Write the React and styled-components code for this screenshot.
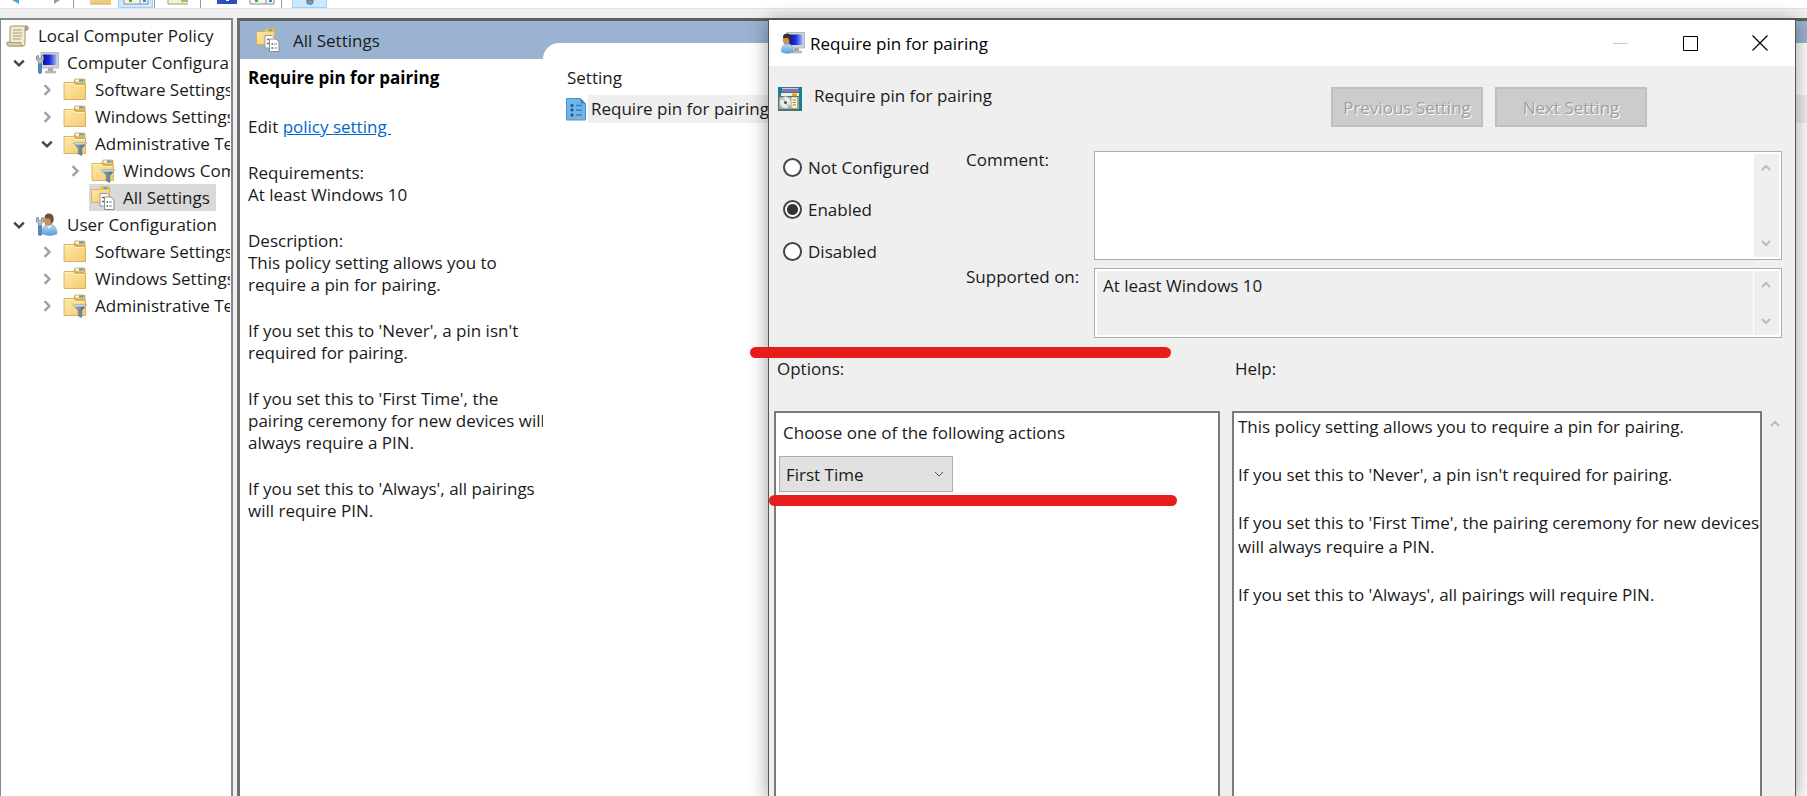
import React from "react";
import styled, { createGlobalStyle } from "styled-components";

const GlobalStyle = createGlobalStyle`
  *, *::before, *::after { box-sizing: border-box; }
  body { margin: 0; overflow: hidden; }
  body, button, select, textarea, input {
    font-family: "Open Sans", "Noto Sans", sans-serif;
    font-size: 17px;
    color: #1a1a1a;
  }
`;

const Page = styled.div`
  position: relative;
  display: flex;
  flex-direction: column;
  height: 100vh;
  overflow: hidden;
  background: #efefef;
`;

/* ---------- toolbar ---------- */

const Toolbar = styled.header`
  display: flex;
  flex: none;
  height: 8px;
  background: #fff;
  box-shadow: 0 1px 0 #e3e3e3;
`;

const ToolGroup = styled.div`
  display: flex;
  padding-left: ${(p) => p.$before}px;
  padding-right: ${(p) => p.$after}px;
  border-right: ${(p) => (p.$last ? "0" : "1px solid #9a9a9a")};
`;

const ToolButton = styled.button`
  display: flex;
  justify-content: center;
  width: 35px;
  height: 8px;
  padding: 0;
  border: solid ${(p) => (p.$active ? "#99d1ff" : "transparent")};
  border-width: 0 1px 1px;
  background: ${(p) => (p.$active ? "#cce8ff" : "transparent")};
`;

/* ---------- console ---------- */

const Workspace = styled.div`
  display: flex;
  flex: 1;
  gap: 4px;
  min-height: 0;
  padding-top: 10px;
`;

const TreePane = styled.nav`
  flex: none;
  width: 233px;
  overflow: hidden;
  padding: 2px 1px 0 0;
  background: #fff;
  border: solid #828790;
  border-width: 2px 2px 0 1px;
`;

const TreeList = styled.ul`
  margin: 0;
  padding: 0;
  list-style: none;
`;

const TreeRow = styled.li`
  display: flex;
  align-items: center;
  height: 27px;
  padding-left: ${(p) => (p.$level ? p.$level * 28 - 24 : 3)}px;
  white-space: nowrap;
`;

const Expander = styled.button`
  display: flex;
  flex: none;
  align-items: center;
  justify-content: center;
  width: 28px;
  height: 27px;
  padding: 0;
  border: 0;
  background: none;
`;

const TreeLabel = styled.span`
  display: flex;
  align-items: center;
  gap: 8px;
  min-width: 0;
  height: 27px;
  padding: 0 ${(p) => (p.$selected ? 6 : 0)}px 0 2px;
  line-height: 24px;
  background: ${(p) => (p.$selected ? "#d9d9d9" : "transparent")};
`;

const TreeText = styled.span`
  min-width: 0;
  overflow: hidden;
`;

const Results = styled.main`
  display: flex;
  flex: 1;
  min-width: 0;
  background: #99b3d1;
  border: solid #6f6f6f;
  border-width: 3px 0 0 3px;
  border-top-color: #5f5f5f;
`;

const DetailColumn = styled.section`
  display: flex;
  flex: none;
  flex-direction: column;
  width: 303px;
`;

const DetailHeader = styled.div`
  display: flex;
  align-items: center;
  gap: 13px;
  height: 38px;
  padding-left: 16px;
`;

const Detail = styled.div`
  display: flex;
  flex: 1;
  flex-direction: column;
  gap: 24px;
  padding: 8px 0 0 8px;
  background: #fff;
  line-height: 22px;
  white-space: nowrap;
`;

const DetailTitle = styled.h1`
  margin: 0 0 3px;
  font-size: 17px;
  line-height: 22px;
  color: #000;
`;

const Para = styled.p`
  margin: 0;
`;

const PolicyLink = styled.a`
  color: #0066cc;
  text-decoration: underline;
  white-space: pre;
`;

const ListColumn = styled.section`
  flex: 1;
  margin-top: 22px;
  padding: 23px 0 0 23px;
  background: #fff;
  border-top-left-radius: 16px;
`;

const SettingTable = styled.table`
  width: 100%;
  border-collapse: collapse;
  th, td { padding: 0; font-weight: 400; text-align: left; }
  th { height: 29px; padding-left: 1px; vertical-align: top; line-height: 24px; }
`;

const SettingCell = styled.div`
  display: flex;
  gap: 2px;
  align-items: center;
  height: 28px;
`;

const SettingName = styled.span`
  flex: 1;
  height: 28px;
  padding-left: 3px;
  line-height: 28px;
  background: #efefef;
`;

/* ---------- dialog ---------- */

const Dialog = styled.div`
  position: absolute;
  top: 18px;
  right: 11px;
  bottom: 0;
  left: 768px;
  display: flex;
  flex-direction: column;
  background: #efefef;
  border: solid #555;
  border-width: 2px 1px 0;
  box-shadow: 0 4px 18px rgba(0, 0, 0, 0.4);
`;

const TitleBar = styled.div`
  display: flex;
  flex: none;
  align-items: center;
  height: 46px;
  padding-left: 12px;
  background: #fff;
`;

const TitleText = styled.h2`
  flex: 1;
  margin: 0;
  padding-left: 5px;
  font-size: 17px;
  font-weight: 400;
  color: #000;
`;

const CaptionButton = styled.button`
  display: flex;
  align-items: center;
  justify-content: center;
  width: 70px;
  height: 46px;
  padding: 0;
  border: 0;
  background: none;
`;

const DialogHeader = styled.div`
  display: flex;
  flex: none;
  gap: 12px;
  height: 85px;
  padding: 21px 148px 0 9px;
`;

const PolicyName = styled.div`
  flex: 1;
  line-height: 18px;
`;

const NavButton = styled.button`
  width: 152px;
  height: 40px;
  padding: 0;
  border: 2px solid #bfbfbf;
  background: #cccccc;
  color: #a0a0a0;
  text-shadow: 1px 1px 0 #fff;
`;

const StateGrid = styled.div`
  display: grid;
  flex: none;
  grid-template-columns: 183px 128px 1fr;
  grid-template-rows: 109px 70px;
  row-gap: 8px;
  padding: 0 13px 0 14px;
`;

const RadioSet = styled.fieldset`
  display: flex;
  flex-direction: column;
  grid-row: 1 / 3;
  gap: 10px;
  margin: 0;
  padding: 0;
  border: 0;
`;

const RadioLabel = styled.label`
  display: flex;
  align-items: center;
  gap: 6px;
  height: 32px;
`;

const Radio = styled.input`
  appearance: none;
  width: 19px;
  height: 19px;
  margin: 0;
  border: 2px solid #444;
  border-radius: 50%;
  background: #fff;
  &:checked { background: radial-gradient(circle, #333 5px, #fff 6px); }
`;

const FieldLabel = styled.label`
  line-height: 18px;
`;

const FieldBox = styled.div`
  display: flex;
  overflow: hidden;
  padding: 2px;
  border: 1px solid #adadad;
  background: #fff;
`;

const FieldText = styled.textarea`
  flex: 1;
  min-width: 0;
  height: 100%;
  padding: 3px 6px;
  border: 0;
  outline: 0;
  resize: none;
  overflow: hidden;
  line-height: 24px;
  background: ${(p) => (p.readOnly ? "#efefef" : "#fff")};
`;

const ScrollTrack = styled.div`
  display: flex;
  flex: none;
  flex-direction: column;
  align-items: center;
  justify-content: space-between;
  width: 26px;
  padding: 9px 2px 9px 0;
  border-left: 1px solid #fff;
  background: #efefef;
`;

const Panes = styled.div`
  display: grid;
  flex: 1;
  grid-template-columns: 446fr 530fr 20px;
  grid-template-rows: 52px 1fr;
  column-gap: 12px;
  min-height: 0;
  padding: 21px 1px 0 5px;
`;

const PaneLabel = styled.div`
  padding-left: 3px;
  line-height: 20px;
`;

const Pane = styled.section`
  border: 2px solid #7a7a7a;
  border-bottom: 0;
  background: #fff;
`;

const OptionsPane = styled(Pane)`
  padding: 8px 3px;
`;

const HelpPane = styled(Pane)`
  min-width: 0;
  padding: 2px 0 0 4px;
  line-height: 24px;
  white-space: nowrap;
  p { margin: 0 0 24px; }
`;

const OptionLabel = styled.label`
  display: block;
  padding-left: 4px;
  line-height: 24px;
`;

const SelectWrap = styled.div`
  display: grid;
  align-items: center;
  width: 174px;
  margin-top: 11px;
  & > * { grid-area: 1 / 1; }
  & > svg { justify-self: end; margin-right: 9px; pointer-events: none; }
`;

const Select = styled.select`
  appearance: none;
  width: 100%;
  height: 36px;
  padding: 0 6px;
  border: 1px solid #adadad;
  border-radius: 0;
  background: #e1e1e1;
`;

const PaneScroll = styled.div`
  grid-column: 3;
  padding: 8px 8px 0 0;
  margin-left: -10px;
  text-align: center;
  line-height: 8px;
`;

/* Red pen strokes drawn over the windows */
const Marker = styled.div`
  position: absolute;
  top: ${(p) => p.$top}px;
  left: ${(p) => p.$left}px;
  width: ${(p) => p.$width}px;
  height: 11px;
  border-radius: 6px;
  background: #e71d1c;
`;

/* ---------- icons ---------- */

const FolderShape = () => (
  <>
    <path d="M1 4.500h9l2-3.500h9.500q1 0 1 1V21.500H1z" fill="#e3b95b" />
    <path d="M12 1h9.500v4H12z" fill="#f4d583" stroke="#c99a3c" strokeWidth=".7" />
    <path d="M16 2.500h4.500" stroke="#3d9be0" strokeWidth="1.800" />
    <path d="M12.500 2.500H16" stroke="#fff" strokeWidth="1.500" />
    <path d="M1 4.500h9.500l2 2H22.500V21.500H1z" fill="url(#folder)" stroke="#d2a850" strokeWidth=".8" />
    <path d="M2 5.500h8l2 2h9.500" stroke="#fff0bd" strokeWidth="1" fill="none" />
  </>
);

const IconDefs = () => (
  <svg width="0" height="0" style={{ position: "absolute" }} aria-hidden="true">
    <defs>
      <linearGradient id="folder" x1="0" y1="0" x2="1" y2="1">
        <stop offset="0" stopColor="#ffe9a6" />
        <stop offset="1" stopColor="#f3cb72" />
      </linearGradient>
      <linearGradient id="screen" x1="0" y1="0" x2="1" y2="0">
        <stop offset="0" stopColor="#0712a8" />
        <stop offset=".5" stopColor="#1c2fe0" />
        <stop offset="1" stopColor="#9ab8ff" />
      </linearGradient>
      <linearGradient id="shirt" x1="0" y1="0" x2="0" y2="1">
        <stop offset="0" stopColor="#b7dbf5" />
        <stop offset="1" stopColor="#5c9bd3" />
      </linearGradient>
      <linearGradient id="funnel" x1="0" y1="0" x2="1" y2="0">
        <stop offset="0" stopColor="#9db6c9" />
        <stop offset=".5" stopColor="#6d8ba5" />
        <stop offset="1" stopColor="#3f5d7a" />
      </linearGradient>
    </defs>
  </svg>
);

const Icon = ({ children }) => (
  <svg width="24" height="24" viewBox="0 0 24 24" fill="none" aria-hidden="true" style={{ flex: "none" }}>
    {children}
  </svg>
);

const FolderIcon = () => <Icon><FolderShape /></Icon>;

const FilterFolderIcon = () => (
  <Icon>
    <FolderShape />
    <path d="M10.500 11h13l-4.700 5.500v7l-3.400-1.500v-5.500z" fill="url(#funnel)" stroke="#4d6a84" strokeWidth=".6" />
    <path d="M11 11.800h12" stroke="#c7d8e5" strokeWidth="1.600" />
  </Icon>
);

const AllSettingsIcon = () => (
  <Icon>
    <path d="M.5 3.500h8l2-3h7q1 0 1 1v15H.5z" fill="url(#folder)" stroke="#d2a850" strokeWidth=".8" />
    <path d="M9.500 .8h8.500v3.200h-8.500z" fill="#f1c24e" />
    <path d="M12.500 2.300h4" stroke="#3d9be0" strokeWidth="1.500" />
    <path d="M9 7.500h7l3 3V20H9z" fill="#fff" stroke="#9a9a9a" />
    <path d="M11 11.500h2M11 15.500h2" stroke="#667" strokeWidth="1.300" />
    <path d="M13.500 11h6.500l3 3v9.500h-9.500z" fill="#fff" stroke="#8d8d8d" />
    <path d="M15.500 16h1.500M15.500 20h1.500" stroke="#44506e" strokeWidth="1.600" />
    <path d="M18 16h3M18 20h3" stroke="#7a86a0" strokeWidth="1.200" />
  </Icon>
);

const ScrollIcon = () => (
  <Icon>
    <path d="M5 2q-1 0-1 2v14H1.500q-.5 0-.5 1.500Q1 22 3 22h14q2 0 2-2.500V6h2q1 0 1-2 0-2-2-2z" fill="#f3ebcf" stroke="#a39468" />
    <path d="M19 6V4q0-2 1.500-2T22 4t-1 2z" fill="#b5a982" stroke="#8f825c" strokeWidth=".7" />
    <path d="M1.500 18.500H15V20q0 2 2 2H3q-2 0-2-2z" fill="#d9cda3" stroke="#a39468" strokeWidth=".8" />
    <path d="M7 6h9M7 9h9M7 12h9M7 15h8" stroke="#a69c7d" />
  </Icon>
);

const Monitor = () => (
  <>
    <path d="M6 1.500h17.500V17H6z" fill="#d3d3d3" stroke="#aaa" strokeWidth=".8" />
    <path d="M8 3.500h13.500V14H8z" fill="url(#screen)" />
    <path d="M13 17h5v3.500h-5z" fill="#a9a9a9" />
    <path d="M10.500 20h10v2h-10z" fill="#c4c4c4" stroke="#999" strokeWidth=".5" />
  </>
);

const Wrench = () => (
  <>
    <path d="M1.500 5v4l2 1.500v3h3v-3l2-1.500V5l-2-.5v3h-3v-3z" fill="#b7bec6" stroke="#6d7882" strokeWidth=".7" />
    <path d="M3.500 13h3v8q0 1.500-1.500 1.500T3.500 21z" fill="#4f8ecb" stroke="#2f689f" strokeWidth=".7" />
  </>
);

const ComputerIcon = () => <Icon><Monitor /><Wrench /></Icon>;

const UserIcon = () => (
  <Icon>
    <path d="M7 21q0-8 4-9.500h6q5 2 5 9.500-7 3-15 0z" fill="url(#shirt)" stroke="#6fa3cf" strokeWidth=".6" />
    <ellipse cx="13" cy="7.500" rx="4" ry="5.500" fill="#c8905a" />
    <path d="M9.500 5q0-4.500 4.500-4.500 5.500 0 4.500 7.500-1 2.500-2.500 3 0-4-1.500-5.500-2.500 0-5-.5z" fill="#6b5038" />
    <path d="M12 13l2.500 3 2-3.500z" fill="#e9f5fd" />
    <Wrench />
  </Icon>
);

const UserComputerIcon = () => (
  <Icon>
    <Monitor />
    <path d="M.5 21q-.5-7 4-8h4q4 1.500 3.800 8-6 3-11.800 0z" fill="url(#shirt)" stroke="#6fa3cf" strokeWidth=".5" />
    <ellipse cx="5.500" cy="8.800" rx="3.800" ry="4.800" fill="#c8905a" />
    <path d="M2 7q-.5-4.500 4-4.500 5 0 4 6.500-.8 2.500-1.800 3 0-3.500-1.400-5.200-2.300.4-4.800.2z" fill="#3f3027" />
  </Icon>
);

const PolicyIcon = () => (
  <Icon>
    <path d="M0 0h24v24H0z" fill="#4f6f7c" />
    <path d="M0 0h4v7H0zM21 0h3v24h-3z" fill="#16808a" />
    <path d="M4 1h17v4H4z" fill="#7a78b4" />
    <path d="M4 1.500h16" stroke="#c6c6e6" />
    <path d="M3 6h18v3H3z" fill="#ededed" />
    <path d="M14 6.500h5v2.500h-5z" fill="#f0a400" />
    <path d="M1 10h20v12H1z" fill="#a5a999" />
    <circle cx="7.500" cy="15.500" r="6" fill="#e9ecea" stroke="#9da5a2" strokeWidth=".7" />
    <path d="M7.500 15.500l5 3-2 2.500z" fill="#a7d9bd" />
    <path d="M7.500 15.500l-4-4 2.500-1.500z" fill="#d6b3d8" />
    <circle cx="7.500" cy="15.500" r="1.500" fill="#555" />
    <path d="M13 10h6.500v11.500h-4.500l-2-2z" fill="#fff6d0" stroke="#a38f57" strokeWidth=".7" />
    <path d="M14.500 13h3.500M14.500 15.500h3.500M14.500 18h3.500" stroke="#8a8366" />
  </Icon>
);

const SettingIcon = () => (
  <svg width="20" height="24" viewBox="0 0 20 24" fill="none" aria-hidden="true">
    <path d="M.5 1.500h14l5 5V23H.5z" fill="#6fb5ea" stroke="#4c93cd" />
    <path d="M14.500 1.500v5h5z" fill="#3f86c2" />
    <path d="M4.500 8.500h3M4.500 13h3M4.500 18h3M6 7v3M6 11.500v3M6 16.500v3" stroke="#1b4c7a" strokeWidth="1.500" />
    <path d="M10 8.500h6M10 13h6M10 18h6" stroke="#3c7db5" strokeWidth="1.600" />
  </svg>
);

const Chevron = ({ dir, color = "#bcbcbc", width = 2, size = 10 }) => {
  const d = {
    up: "M1 7l4-4 4 4",
    down: "M1 3l4 4 4-4",
    right: "M3 1l4 4-4 4",
  }[dir];
  return (
    <svg width={size} height={size} viewBox="0 0 10 10" fill="none" aria-hidden="true" style={{ flex: "none" }}>
      <path d={d} stroke={color} strokeWidth={width} />
    </svg>
  );
};

const ToolIcon = ({ children }) => (
  <svg width="26" height="7" viewBox="0 0 26 7" fill="none" aria-hidden="true">{children}</svg>
);

const WindowTool = () => (
  <ToolIcon>
    <path d="M1 0h24v4H1z" fill="#f4f4f4" />
    <path d="M1 0v4h24V0M17 0v4" stroke="#8d8d8d" />
    <path d="M6 1h3" stroke="#44b02c" strokeWidth="2" />
    <path d="M20 1h3" stroke="#3c85cf" strokeWidth="2" />
  </ToolIcon>
);

/* ---------- page ---------- */

const tree = [
  { level: 0, label: "Local Computer Policy", icon: ScrollIcon },
  { level: 1, label: "Computer Configurat", icon: ComputerIcon, open: true },
  { level: 2, label: "Software Settings", icon: FolderIcon, open: false },
  { level: 2, label: "Windows Settings", icon: FolderIcon, open: false },
  { level: 2, label: "Administrative Te", icon: FilterFolderIcon, open: true },
  { level: 3, label: "Windows Com", icon: FilterFolderIcon, open: false },
  { level: 3, label: "All Settings", icon: AllSettingsIcon, selected: true },
  { level: 1, label: "User Configuration", icon: UserIcon, open: true },
  { level: 2, label: "Software Settings", icon: FolderIcon, open: false },
  { level: 2, label: "Windows Settings", icon: FolderIcon, open: false },
  { level: 2, label: "Administrative Te", icon: FilterFolderIcon, open: false },
];

const TreeItem = ({ item }) => {
  const ItemIcon = item.icon;
  return (
    <TreeRow $level={item.level}>
      {item.level > 0 && (
        <Expander
          aria-label={item.label}
          as={item.open === undefined ? "span" : "button"}
        >
          {item.open === true && <Chevron dir="down" color="#444" size={12} />}
          {item.open === false && <Chevron dir="right" color="#a0a0a0" size={12} />}
        </Expander>
      )}
      <TreeLabel $selected={item.selected}>
        <ItemIcon />
        <TreeText>{item.label}</TreeText>
      </TreeLabel>
    </TreeRow>
  );
};

export default function App() {
  return (
    <Page>
      <GlobalStyle />
      <IconDefs />
      <Toolbar>
        <ToolGroup $before={0} $after={3}>
          <ToolButton aria-label="Back">
            <ToolIcon><path d="M7 0l7 4V0z" fill="#4aa3dc" /></ToolIcon>
          </ToolButton>
          <ToolButton aria-label="Forward">
            <ToolIcon><path d="M14 4V0h6z" fill="#9a9a9a" /></ToolIcon>
          </ToolButton>
        </ToolGroup>
        <ToolGroup $before={9} $after={1}>
          <ToolButton aria-label="Up one level">
            <ToolIcon><path d="M2 0h21v4H2z" fill="#f0cd7c" /><path d="M2 4h21" stroke="#cda75b" /></ToolIcon>
          </ToolButton>
          <ToolButton $active aria-label="Show or hide tree"><WindowTool /></ToolButton>
        </ToolGroup>
        <ToolGroup $before={5} $after={5}>
          <ToolButton aria-label="Export list">
            <ToolIcon>
              <path d="M3 0h20v4H3z" fill="#f8f0cf" />
              <path d="M3 0v4h20" stroke="#a29b83" />
              <path d="M16 1h7" stroke="#8cc873" strokeWidth="2" />
            </ToolIcon>
          </ToolButton>
        </ToolGroup>
        <ToolGroup $before={8} $after={2}>
          <ToolButton aria-label="Help">
            <ToolIcon><path d="M3 0h20v4H3z" fill="#2c50b8" /><path d="M12 0h3v1h-3z" fill="#fff" /></ToolIcon>
          </ToolButton>
          <ToolButton aria-label="Show or hide action pane"><WindowTool /></ToolButton>
        </ToolGroup>
        <ToolGroup $before={10} $after={0} $last>
          <ToolButton $active aria-label="Filter">
            <ToolIcon><path d="M10 0h6v3l-2 1.500-4-1z" fill="#8498a8" stroke="#607686" /></ToolIcon>
          </ToolButton>
        </ToolGroup>
      </Toolbar>

      <Workspace>
        <TreePane aria-label="Console tree">
          <TreeList>
            {tree.map((item, i) => <TreeItem key={i} item={item} />)}
          </TreeList>
        </TreePane>

        <Results>
          <DetailColumn>
            <DetailHeader><AllSettingsIcon />All Settings</DetailHeader>
            <Detail>
              <DetailTitle>Require pin for pairing</DetailTitle>
              <Para>Edit <PolicyLink href="#policy">{"policy setting "}</PolicyLink></Para>
              <Para>Requirements:<br />At least Windows 10</Para>
              <Para>Description:<br />This policy setting allows you to<br />require a pin for pairing.</Para>
              <Para>If you set this to 'Never', a pin isn't<br />required for pairing.</Para>
              <Para>If you set this to 'First Time', the<br />pairing ceremony for new devices will<br />always require a PIN.</Para>
              <Para>If you set this to 'Always', all pairings<br />will require PIN.</Para>
            </Detail>
          </DetailColumn>
          <ListColumn>
            <SettingTable>
              <thead><tr><th>Setting</th></tr></thead>
              <tbody>
                <tr>
                  <td>
                    <SettingCell><SettingIcon /><SettingName>Require pin for pairing</SettingName></SettingCell>
                  </td>
                </tr>
              </tbody>
            </SettingTable>
          </ListColumn>
        </Results>
      </Workspace>

      <Dialog role="dialog" aria-labelledby="dialog-title">
        <TitleBar>
          <UserComputerIcon />
          <TitleText id="dialog-title">Require pin for pairing</TitleText>
          <CaptionButton aria-label="Minimize" disabled>
            <svg width="15" height="15"><path d="M0 7.500h15" stroke="#c8c8c8" /></svg>
          </CaptionButton>
          <CaptionButton aria-label="Maximize">
            <svg width="15" height="15"><path d="M.5.5h14v14H.5z" fill="none" stroke="#000" /></svg>
          </CaptionButton>
          <CaptionButton aria-label="Close">
            <svg width="16" height="16"><path d="M.5.5l15 15M15.500.5l-15 15" stroke="#000" strokeWidth="1.200" /></svg>
          </CaptionButton>
        </TitleBar>

        <DialogHeader>
          <PolicyIcon />
          <PolicyName>Require pin for pairing</PolicyName>
          <NavButton disabled>Previous Setting</NavButton>
          <NavButton disabled>Next Setting</NavButton>
        </DialogHeader>

        <StateGrid>
          <RadioSet aria-label="Policy state">
            <RadioLabel><Radio type="radio" name="state" />Not Configured</RadioLabel>
            <RadioLabel><Radio type="radio" name="state" defaultChecked />Enabled</RadioLabel>
            <RadioLabel><Radio type="radio" name="state" />Disabled</RadioLabel>
          </RadioSet>
          <FieldLabel htmlFor="comment">Comment:</FieldLabel>
          <FieldBox>
            <FieldText id="comment" />
            <ScrollTrack><Chevron dir="up" /><Chevron dir="down" /></ScrollTrack>
          </FieldBox>
          <FieldLabel htmlFor="supported">Supported on:</FieldLabel>
          <FieldBox>
            <FieldText id="supported" readOnly value="At least Windows 10" />
            <ScrollTrack><Chevron dir="up" /><Chevron dir="down" /></ScrollTrack>
          </FieldBox>
        </StateGrid>

        <Panes>
          <PaneLabel>Options:</PaneLabel>
          <PaneLabel>Help:</PaneLabel>
          <span />
          <OptionsPane aria-label="Options">
            <OptionLabel htmlFor="action">Choose one of the following actions</OptionLabel>
            <SelectWrap>
              <Select id="action" defaultValue="First Time">
                <option>Never</option>
                <option>First Time</option>
                <option>Always</option>
              </Select>
              <Chevron dir="down" color="#555" width={1} />
            </SelectWrap>
          </OptionsPane>
          <HelpPane aria-label="Help">
            <p>This policy setting allows you to require a pin for pairing.</p>
            <p>If you set this to 'Never', a pin isn't required for pairing.</p>
            <p>If you set this to 'First Time', the pairing ceremony for new devices<br />will always require a PIN.</p>
            <p>If you set this to 'Always', all pairings will require PIN.</p>
          </HelpPane>
          <PaneScroll><Chevron dir="up" /></PaneScroll>
        </Panes>
      </Dialog>

      <Marker $top={347} $left={750} $width={421} />
      <Marker $top={495} $left={769} $width={408} />
    </Page>
  );
}
